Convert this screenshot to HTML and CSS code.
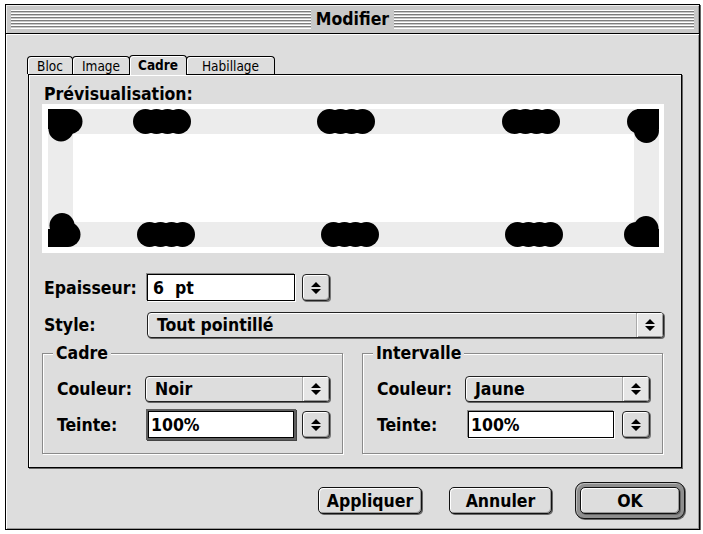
FILE: index.html
```html
<!DOCTYPE html>
<html lang="fr">
<head>
<meta charset="utf-8">
<title>Modifier</title>
<link rel="stylesheet" href="styles.css">
</head>
<body>
<div class="window">
  <div class="titlebar">
    <div class="stripes"></div>
    <span class="title">Modifier</span>
    <div class="stripes"></div>
  </div>
  <div class="content">
    <div class="tabs">
      <div class="tab t-bloc">Bloc</div>
      <div class="tab t-image">Image</div>
      <div class="tab t-cadre active">Cadre</div>
      <div class="tab t-hab">Habillage</div>
    </div>
    <div class="panel">
      <div class="plabel">Prévisualisation:</div>
      <div class="preview">
        <svg width="622" height="149" viewBox="0 0 622 149">
          <rect x="6" y="5" width="611" height="138" fill="#ececec"/>
          <rect x="31" y="30" width="561" height="88" fill="#fff"/>
          <g fill="#000">
            <rect x="6" y="5" width="22" height="20"/>
            <circle cx="28" cy="17.5" r="12.5"/>
            <circle cx="19" cy="25" r="12.5"/>
            <rect x="6" y="125" width="20" height="18"/>
            <circle cx="20" cy="121.5" r="12.5"/>
            <circle cx="26" cy="130.5" r="12.5"/>
            <rect x="595" y="5" width="22" height="20"/>
            <circle cx="597.5" cy="17.5" r="12.5"/>
            <circle cx="604.5" cy="26.5" r="12.5"/>
            <rect x="595" y="125" width="22" height="18"/>
            <circle cx="604" cy="124.5" r="12.5"/>
            <circle cx="594.5" cy="130.5" r="12.5"/>
            <rect x="103.5" y="6" width="33" height="23"/>
            <circle cx="103.5" cy="17.5" r="12.5"/><circle cx="114.5" cy="17.5" r="12.5"/><circle cx="125.5" cy="17.5" r="12.5"/><circle cx="136.5" cy="17.5" r="12.5"/>
            <rect x="287.5" y="6" width="33" height="23"/>
            <circle cx="287.5" cy="17.5" r="12.5"/><circle cx="298.5" cy="17.5" r="12.5"/><circle cx="309.5" cy="17.5" r="12.5"/><circle cx="320.5" cy="17.5" r="12.5"/>
            <rect x="472.5" y="6" width="33" height="23"/>
            <circle cx="472.5" cy="17.5" r="12.5"/><circle cx="483.5" cy="17.5" r="12.5"/><circle cx="494.5" cy="17.5" r="12.5"/><circle cx="505.5" cy="17.5" r="12.5"/>
            <rect x="107.5" y="119" width="33" height="23"/>
            <circle cx="107.5" cy="130.5" r="12.5"/><circle cx="118.5" cy="130.5" r="12.5"/><circle cx="129.5" cy="130.5" r="12.5"/><circle cx="140.5" cy="130.5" r="12.5"/>
            <rect x="291.5" y="119" width="33" height="23"/>
            <circle cx="291.5" cy="130.5" r="12.5"/><circle cx="302.5" cy="130.5" r="12.5"/><circle cx="313.5" cy="130.5" r="12.5"/><circle cx="324.5" cy="130.5" r="12.5"/>
            <rect x="475.5" y="119" width="33" height="23"/>
            <circle cx="475.5" cy="130.5" r="12.5"/><circle cx="486.5" cy="130.5" r="12.5"/><circle cx="497.5" cy="130.5" r="12.5"/><circle cx="508.5" cy="130.5" r="12.5"/>
          </g>
        </svg>
      </div>
      <div class="row row-ep">
        <span class="lbl">Epaisseur:</span>
        <div class="field ep-field">6  pt</div>
        <div class="stepper"><svg width="12" height="14" viewBox="0 0 12 14"><path d="M1 6H11L6 1Z M1 8H11L6 13Z" fill="#000"/></svg></div>
      </div>
      <div class="row row-style">
        <span class="lbl">Style:</span>
        <div class="popup style-popup"><span class="ptext">Tout pointillé</span><span class="parrow"><svg width="12" height="14" viewBox="0 0 12 14"><path d="M1 6H11L6 1Z M1 8H11L6 13Z" fill="#000"/></svg></span></div>
      </div>
      <div class="groups">
        <fieldset class="group">
          <legend>Cadre</legend>
          <div class="grow g-couleur">
            <span class="glbl">Couleur:</span>
            <div class="popup gpopup"><span class="ptext">Noir</span><span class="parrow"><svg width="12" height="14" viewBox="0 0 12 14"><path d="M1 6H11L6 1Z M1 8H11L6 13Z" fill="#000"/></svg></span></div>
          </div>
          <div class="grow g-teinte">
            <span class="glbl">Teinte:</span>
            <div class="field gfield focus">100%</div>
            <div class="stepper gstepper"><svg width="12" height="14" viewBox="0 0 12 14"><path d="M1 6H11L6 1Z M1 8H11L6 13Z" fill="#000"/></svg></div>
          </div>
        </fieldset>
        <fieldset class="group">
          <legend>Intervalle</legend>
          <div class="grow g-couleur">
            <span class="glbl">Couleur:</span>
            <div class="popup gpopup"><span class="ptext">Jaune</span><span class="parrow"><svg width="12" height="14" viewBox="0 0 12 14"><path d="M1 6H11L6 1Z M1 8H11L6 13Z" fill="#000"/></svg></span></div>
          </div>
          <div class="grow g-teinte">
            <span class="glbl">Teinte:</span>
            <div class="field gfield">100%</div>
            <div class="stepper gstepper"><svg width="12" height="14" viewBox="0 0 12 14"><path d="M1 6H11L6 1Z M1 8H11L6 13Z" fill="#000"/></svg></div>
          </div>
        </fieldset>
      </div>
    </div>
    <div class="buttons">
      <div class="btn b-appl">Appliquer</div>
      <div class="btn b-ann">Annuler</div>
      <div class="okring"><div class="btn b-ok">OK</div></div>
    </div>
  </div>
</div>
</body>
</html>
```
FILE: styles.css
```css
* { box-sizing: border-box; }
html, body { margin: 0; padding: 0; background: #fff; }
body {
  font-family: "DejaVu Sans Condensed", "DejaVu Sans", sans-serif;
  font-weight: bold;
  font-size: 17.5px;
  color: #000;
}
.window {
  margin: 4px 0 0 5px;
  width: 695px;
  height: 526px;
  border: 1px solid #000;
  background: #dddddd;
  box-shadow: 1px 1px 0 #666;
  display: flex;
  flex-direction: column;
}
.titlebar {
  height: 29px;
  flex: none;
  border-bottom: 1px solid #000;
  background: #c8c8c8;
  display: flex;
  align-items: center;
  padding: 0 5px;
  gap: 4px;
  box-shadow: inset 1px 1px 0 #eee, inset -1px 0 0 #999;
}
.stripes {
  flex: 1;
  height: 19px;
  background: repeating-linear-gradient(to bottom, #fff 0 1px, #7c7c7c 1px 2px, #c8c8c8 2px 3px);
}
.title { line-height: 18px; padding: 0 1px; }
.content {
  flex: 1;
  padding: 22px 17px 0 22px;
  box-shadow: inset 1px 1px 0 #fff, inset -1px -1px 0 #999;
}
.tabs { display: flex; align-items: flex-start; height: 18px; margin-left: -1px; }
.tab {
  height: 18px;
  border: 1px solid #000;
  border-bottom: none;
  border-radius: 4px 4px 0 0;
  font-weight: normal;
  font-size: 13.5px;
  display: flex;
  align-items: center;
  justify-content: center;
  margin-right: -1px;
  background: #dddddd;
  box-shadow: inset 1px 1px 0 #fff;
}
.t-bloc { width: 46px; }
.t-image { width: 58px; }
.t-cadre { width: 58px; }
.t-hab { width: 89px; }
.tab.active {
  font-weight: bold;
  height: 20px;
  margin-top: -1px;
  position: relative;
  z-index: 1;
  padding-bottom: 1px;
}
.panel {
  height: 394px;
  border: 1px solid #000;
  box-shadow: 1px 1px 0 #666, inset 1px 1px 0 #fff;
  padding-top: 10px;
}
.plabel { margin-left: 15px; line-height: 18px; }
.preview { margin: 1px 0 0 13px; width: 622px; height: 149px; background: #fff; }
.preview svg { display: block; }
.row { display: flex; align-items: center; margin-left: 15px; }
.row-ep { margin-top: 21px; height: 27px; }
.row-style { margin-top: 11px; height: 26px; }
.lbl { width: 103px; line-height: 18px; }
.field {
  height: 27px;
  background: #fff;
  border: 1px solid #000;
  box-shadow: -1px -1px 0 #8a8a8a, 1px 1px 0 #fff;
  display: flex;
  align-items: center;
  white-space: pre;
  line-height: 18px;
}
.ep-field { width: 148px; padding-left: 5px; }
.stepper {
  margin-left: 7px;
  width: 28px;
  height: 27px;
  border: 1px solid #222;
  border-radius: 4px;
  background: #dddddd;
  box-shadow: inset 1px 1px 0 #fff, inset -1px -1px 0 #999, 1px 1px 0 #777;
  display: flex;
  align-items: center;
  justify-content: center;
}
.stepper svg, .parrow svg { display: block; }
.popup {
  height: 26px;
  border: 1px solid #222;
  border-radius: 4px;
  background: #dddddd;
  box-shadow: inset 1px 1px 0 #fff, 1px 1px 0 #666;
  display: flex;
  align-items: center;
  overflow: hidden;
}
.style-popup { width: 517px; }
.ptext { padding-left: 9px; line-height: 18px; }
.parrow {
  margin-left: auto;
  width: 27px;
  height: 100%;
  border-left: 1px solid #aaa;
  background: #e6e6e6;
  box-shadow: inset 1px 1px 0 #fff, inset -1px -1px 0 #999;
  display: flex;
  align-items: center;
  justify-content: center;
}
.groups { display: flex; gap: 19px; margin: 6px 0 0 13px; }
.group {
  margin: 0;
  width: 301px;
  min-width: 0;
  padding: 14px 0 15px 14px;
  border: 1px solid #8a8a8a;
  box-shadow: inset 1px 1px 0 #fff, 1px 1px 0 #fff;
}
.group legend {
  padding: 0 3px;
  margin-left: -4px;
  line-height: 18px;
  background: #dddddd;
}
.grow { display: flex; align-items: center; }
.g-couleur { height: 26px; }
.g-teinte { height: 27px; margin-top: 9px; }
.glbl { width: 88px; line-height: 18px; }
.gpopup { width: 185px; }
.gfield { margin-left: 3px; width: 146px; padding-left: 2px; }
.gfield.focus { box-shadow: 0 0 0 2px #5e5e5e, 1px 1px 0 2px #444; }
.gstepper { margin-left: 8px; }
.buttons {
  display: flex;
  justify-content: flex-end;
  align-items: center;
  margin: 14px -3px 0 0;
  height: 37px;
}
.btn {
  height: 27px;
  border: 1px solid #111;
  border-radius: 5px;
  background: #dddddd;
  box-shadow: inset 1px 1px 0 #fff, inset -1px -1px 0 #999, 1px 1px 0 #666;
  display: flex;
  align-items: center;
  justify-content: center;
  line-height: 18px;
}
.b-appl { width: 104px; }
.b-ann { width: 103px; margin-left: 27px; }
.okring {
  margin-left: 23px;
  border: 1px solid #111;
  border-radius: 9px;
  padding: 4px;
  background: #8e8e8e;
  box-shadow: inset 1px 1px 0 #bbb, 1px 1px 0 #666;
}
.b-ok { width: 100px; }
```
